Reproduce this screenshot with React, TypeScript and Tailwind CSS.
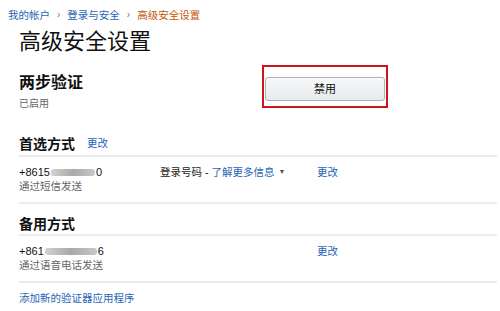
// Two-step verification settings page (Amazon-style account security screen)

const FONT = { fontFamily: '"Liberation Sans", "Noto Sans CJK SC", sans-serif' }

function Blur({ width }: { width: number }) {
  // masked phone digits: soft grey smear
  return (
    <span
      className="inline-block h-[7px] align-middle mx-[1px] rounded-[3px] bg-gradient-to-r from-[#d2d2d2] via-[#a9a9a9] to-[#c9c9c9] blur-[0.6px]"
      style={{ width }}
    />
  )
}

function Divider() {
  return <div className="h-[2px] bg-[#ececec]" />
}

function PhoneRow({
  prefix,
  hidden,
  tail,
  via,
  middle,
}: {
  prefix: string
  hidden: number
  tail: string
  via: string
  middle?: boolean
}) {
  return (
    <div className="flex items-start pt-[8px] pb-[8px]">
      <div className="w-[141px]">
        <div className="h-[14px] leading-[14px] text-[11px] text-[#111] flex items-center">
          <span>{prefix}</span>
          <Blur width={hidden} />
          <span>{tail}</span>
        </div>
        <div className="h-[15px] leading-[15px] text-[10.5px] text-[#666]">{via}</div>
      </div>
      <div className="w-[157px] h-[14px] leading-[14px] text-[10.5px] text-[#222] flex items-center">
        {middle && (
          <>
            <span>登录号码 - </span>
            <span className="text-[#1f66b5] ml-[3px]">了解更多信息</span>
            <span className="text-[#555] text-[7px] ml-[4px]">▼</span>
          </>
        )}
      </div>
      <div className="h-[14px] leading-[14px] text-[10.5px] text-[#1f66b5]">更改</div>
    </div>
  )
}

export default function App() {
  return (
    <div className="w-[500px] h-[311px] bg-white overflow-hidden" style={FONT}>
      {/* breadcrumb */}
      <div className="pt-[8px] pl-[8px] flex items-center h-[22px] text-[10.5px] leading-[14px]">
        <span className="text-[#1f66b5]">我的帐户</span>
        <span className="text-[#777] mx-[7px] text-[10px]">›</span>
        <span className="text-[#1f66b5]">登录与安全</span>
        <span className="text-[#777] mx-[7px] text-[10px]">›</span>
        <span className="text-[#c45500]">高级安全设置</span>
      </div>

      <div className="pl-[19px] pr-[3px]">
        <h1 className="mt-[7px] text-[22px] leading-[26px] text-[#111] font-normal">高级安全设置</h1>

        {/* two-step status + disable */}
        <div className="mt-[10px] flex items-start">
          <div className="w-[243px] pt-[8px]">
            <div className="text-[16px] leading-[20px] font-bold text-[#111]">两步验证</div>
            <div className="mt-[4px] text-[10px] leading-[14px] text-[#666]">已启用</div>
          </div>
          <div className="border-2 border-[#d0121b] w-[126px] h-[43px] pt-[9px] pl-[1px]">
            <button className="w-[120px] h-[24px] rounded-[3px] border border-[#adb1b8] bg-gradient-to-b from-[#f7f8fa] to-[#e7e9ec] text-[11px] text-[#111] shadow-[0_1px_0_rgba(255,255,255,0.6)_inset]">
              禁用
            </button>
          </div>
        </div>

        {/* preferred */}
        <div className="mt-[23px] flex items-center h-[20px]">
          <span className="text-[14px] font-bold text-[#111]">首选方式</span>
          <span className="ml-[12px] text-[10.5px] text-[#1f66b5]">更改</span>
        </div>
        <div className="mt-[1px]">
          <Divider />
        </div>
        <PhoneRow prefix="+8615" hidden={44} tail="0" via="通过短信发送" middle />
        <Divider />

        {/* backup */}
        <div className="mt-[10px] flex items-center h-[20px]">
          <span className="text-[14px] font-bold text-[#111]">备用方式</span>
        </div>
        <Divider />
        <PhoneRow prefix="+861" hidden={52} tail="6" via="通过语音电话发送" />
        <Divider />

        <div className="mt-[8px] text-[10.5px] leading-[14px] text-[#1f66b5]">添加新的验证器应用程序</div>
      </div>
    </div>
  )
}
